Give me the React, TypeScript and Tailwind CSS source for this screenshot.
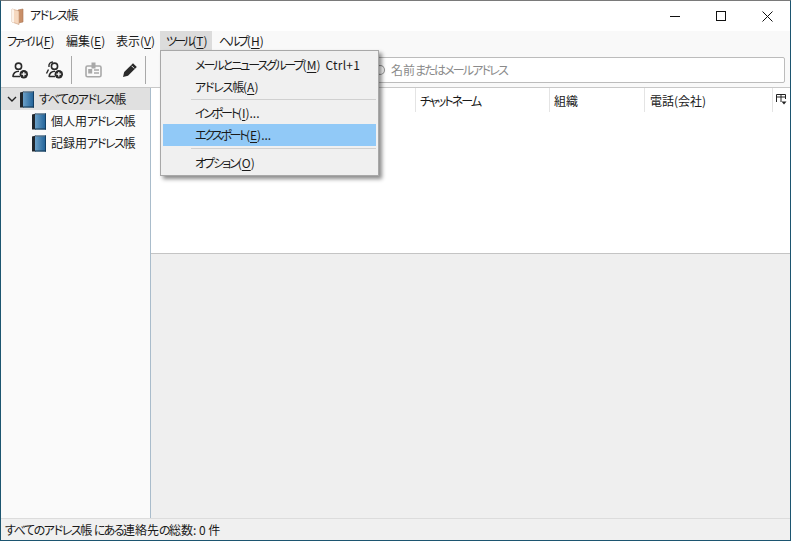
import type { ReactNode } from "react";

const font = "font-['Noto_Sans_CJK_JP','Noto_Sans',sans-serif] [font-feature-settings:'palt']";

function Book() {
  return (
    <svg width="14" height="17" viewBox="0 0 14 17" className="shrink-0">
      <defs>
        <linearGradient id="bookCover" x1="0" y1="0" x2="1" y2="0">
          <stop offset="0" stopColor="#6ba0c8" />
          <stop offset="1" stopColor="#1d5f96" />
        </linearGradient>
      </defs>
      <path d="M0 1.5 L4 0.5 L4 16.5 L0 16.5 Z" fill="#20262c" />
      <rect x="3" y="0.5" width="11" height="16" fill="url(#bookCover)" />
      <rect x="3" y="0.5" width="11" height="1" fill="#5b6a78" />
      <rect x="13" y="0.5" width="1" height="16" fill="#123f66" />
      <rect x="3" y="15.5" width="11" height="1" fill="#16364f" />
    </svg>
  );
}

function AddPerson({ second }: { second?: boolean }) {
  return (
    <svg width="18" height="18" viewBox="0 0 18 18" fill="none" stroke="#2a2a2a" strokeWidth="1.6">
      {second && <path d="M8 1 C5 1 3.5 3 4 6 M3.5 8.5 L1.5 12.5" strokeWidth="1.4" />}
      <circle cx={second ? 9.5 : 8.5} cy="5.2" r="3.1" />
      {second ? (
        <path d="M4 15.8 C4.5 12 6.5 10.3 10 10.3 M4 15.5 H10" />
      ) : (
        <path d="M2.8 15.8 C3.2 12 5.5 10.3 9 10.3 M2.8 15.5 H10" />
      )}
      <circle cx="13.8" cy="13.2" r="4.2" fill="#2a2a2a" stroke="none" />
      <path d="M11.5 13.2 H16.1 M13.8 10.9 V15.5" stroke="#fff" strokeWidth="1.2" />
    </svg>
  );
}

function CardIcon() {
  return (
    <svg width="17" height="16" viewBox="0 0 17 16" fill="none" stroke="#a8a8a8" strokeWidth="1.6">
      <rect x="1" y="4" width="15" height="10.8" rx="1.5" />
      <rect x="6.5" y="0.5" width="4" height="6" fill="#a8a8a8" stroke="none" />
      <rect x="3.2" y="7" width="4" height="4.5" fill="#a8a8a8" stroke="none" />
      <path d="M9 8 H14 M9 11 H14" strokeWidth="1.3" />
    </svg>
  );
}

function Pencil() {
  return (
    <svg width="16" height="16" viewBox="0 0 16 16" fill="#2a2a2a">
      <path d="M11 1.2 L14.8 5 L6 13.8 L1 15 L2.2 10 Z" />
      <path d="M9.6 3.8 L12.2 6.4" stroke="#f9f9f9" strokeWidth="0.9" />
    </svg>
  );
}

function AppIcon() {
  return (
    <svg width="14" height="17" viewBox="0 0 14 17">
      <path d="M8 2 L13 1 L13 14 L8 15 Z" fill="#c98f68" stroke="#a97350" strokeWidth="0.6" />
      <path d="M2 1 L9 3 L9 16.5 L2 14 Z" fill="#f6d8bf" stroke="#c79a7b" strokeWidth="0.6" />
      <path d="M2 1 L4 1.6 L4 14.7 L2 14 Z" fill="#fdf3ea" />
    </svg>
  );
}

function Mnemonic({ label, k, rest = "", tr = "" }: { label: string; k: string; rest?: string; tr?: string }) {
  return (
    <span className="whitespace-nowrap">
      <span className={tr}>{label}</span>(<span className="underline underline-offset-2">{k}</span>){rest}
    </span>
  );
}

function TopMenu({ children, active, w }: { children: ReactNode; active?: boolean; w: string }) {
  return <div className={`flex h-[21px] items-center pb-[1px] pl-[6px] ${w} ${active ? "bg-[#dcdcdc]" : ""}`}>{children}</div>;
}

function ToolBtn({ children, w }: { children: ReactNode; w: string }) {
  return <div className={`flex h-full items-center justify-center ${w}`}>{children}</div>;
}

function Sep() {
  return <div className="h-[28px] w-px bg-[#a9a9a9]" />;
}

function MenuRow({ children, right, hi }: { children: ReactNode; right?: string; hi?: boolean }) {
  return (
    <div className={`flex h-[22px] items-center justify-between pl-[32px] pr-[16px] ${hi ? "bg-[#91c9f7]" : ""}`}>
      <span>{children}</span>
      {right && <span className="tracking-[0.2px]">{right}</span>}
    </div>
  );
}

function Col({ w, children }: { w: string; children?: ReactNode }) {
  return <div className={`flex h-[24px] shrink-0 items-center border-r border-[#e4e4e4] pl-[4px] pt-[1px] ${w}`}>{children}</div>;
}

export default function App() {
  return (
    <div className={`relative flex h-[541px] w-[791px] flex-col overflow-hidden border border-[#1c5570] border-t-[#7a7a7a] bg-white text-[12px] leading-none text-[#1a1a1a] ${font}`}>
      {/* title bar */}
      <div className="flex h-[30px] shrink-0 items-center bg-white">
        <div className="ml-[9px] mr-[6px] flex w-[14px]">
          <AppIcon />
        </div>
        <span className="pb-[2px] tracking-[-1.4px] text-[#222]">アドレス帳</span>
        <div className="ml-auto flex h-full items-center">
          <div className="flex w-[46px] justify-center">
            <div className="h-px w-[10px] bg-[#111]" />
          </div>
          <div className="flex w-[46px] justify-center">
            <div className="h-[10px] w-[10px] border border-[#111]" />
          </div>
          <div className="flex w-[46px] justify-center">
            <svg width="11" height="11" viewBox="0 0 11 11" stroke="#111" strokeWidth="1">
              <path d="M0.5 0.5 L10.5 10.5 M10.5 0.5 L0.5 10.5" />
            </svg>
          </div>
        </div>
      </div>

      {/* menu bar */}
      <div className="flex h-[21px] shrink-0 items-center bg-[#f9f9f9]">
        <TopMenu w="w-[59px]"><Mnemonic label="ファイル" k="F" tr="tracking-[-2.2px]" /></TopMenu>
        <TopMenu w="w-[50px]"><Mnemonic label="編集" k="E" /></TopMenu>
        <TopMenu w="w-[50px]"><Mnemonic label="表示" k="V" /></TopMenu>
        <TopMenu w="w-[52px]" active><Mnemonic label="ツール" k="T" tr="tracking-[-2.6px]" /></TopMenu>
        <TopMenu w="w-[60px]"><span className="ml-[1px]"><Mnemonic label="ヘルプ" k="H" tr="tracking-[-2.2px]" /></span></TopMenu>
      </div>

      {/* toolbar */}
      <div className="flex h-[36px] shrink-0 items-center border-b border-[#c8c8c8] bg-[#f9f9f9]">
        <ToolBtn w="w-[35px]"><AddPerson /></ToolBtn>
        <ToolBtn w="w-[35px]"><AddPerson second /></ToolBtn>
        <Sep />
        <ToolBtn w="w-[42px]"><CardIcon /></ToolBtn>
        <ToolBtn w="w-[31px]"><Pencil /></ToolBtn>
        <Sep />
        <div className="ml-[20px] mr-[5px] flex h-[26px] flex-1 items-center rounded-[2px] border border-[#bcbcbc] bg-white pl-[207px] text-[#8a8a8a]">
          <svg width="12" height="12" viewBox="0 0 12 12" fill="none" stroke="#999" strokeWidth="1.2" className="mr-[5px]">
            <circle cx="6" cy="6" r="4.5" />
          </svg>
          名前<span className="tracking-[-1.8px]">またはメールアドレス</span>
        </div>
      </div>

      {/* body */}
      <div className="flex min-h-0 flex-1">
        <aside className="w-[150px] shrink-0 border-r border-[#a9bccb] bg-[#fafafa]">
          <div className="flex h-[22px] items-center bg-[#e0e0e0] pl-[6px]">
            <svg width="10" height="10" viewBox="0 0 10 10" fill="none" stroke="#222" strokeWidth="1.4" className="mr-[3px]">
              <path d="M1 3 L5 7 L9 3" />
            </svg>
            <Book />
            <span className="ml-[5px] tracking-[-1.4px]">すべてのアドレス帳</span>
          </div>
          <div className="flex h-[22px] items-center pl-[31px]">
            <Book />
            <span className="ml-[5px]">個人用<span className="tracking-[-1.4px]">アドレス</span>帳</span>
          </div>
          <div className="flex h-[22px] items-center pl-[31px]">
            <Book />
            <span className="ml-[5px]">記録用<span className="tracking-[-1.4px]">アドレス</span>帳</span>
          </div>
        </aside>
        <main className="flex min-w-0 flex-1 flex-col">
          <div className="h-[166px] shrink-0 border-b border-[#c4c4c4] bg-white">
            <div className="flex h-[24px]">
              <Col w="w-[265px]" />
              <Col w="w-[134px]"><span className="tracking-[-1.9px]">チャットネーム</span></Col>
              <Col w="w-[95px]">組織</Col>
              <Col w="w-[128px]"><span className="ml-[1px]">電話(会社)</span></Col>
              <div className="flex flex-1 items-center justify-center pb-[1px]">
                <svg width="11" height="11" viewBox="0 0 11 11" fill="none" stroke="#222">
                  <path d="M0.5 8 V0.5 H9.5 V5 M0.5 3 H9.5 M5 0.5 V8" />
                  <path d="M5.5 7.5 H10.5 L8 10.5 Z" fill="#222" stroke="none" />
                </svg>
              </div>
            </div>
          </div>
          <div className="flex-1 bg-[#efefef]" />
        </main>
      </div>

      {/* status bar */}
      <div className="flex h-[22px] shrink-0 items-center whitespace-pre border-t border-[#dcdcdc] bg-[#f0f0f0] pl-[4px]">
        <span className="mr-[3px] tracking-[-1.4px]">すべてのアドレス帳</span> <span className="tracking-[-1.6px]">にある</span>連絡先<span className="tracking-[-1.6px]">の</span>総数: 0 件
      </div>

      {/* open tools menu */}
      <div className="absolute left-[159px] top-[49px] w-[219px] border border-[#a8a8a8] bg-[#f0f0f0] px-[2px] pb-[1px] pt-[3px] shadow-[3px_3px_4px_rgba(0,0,0,0.45)]">
        <MenuRow right="Ctrl+1"><Mnemonic label="メールとニュースグループ" k="M" tr="tracking-[-2px]" /></MenuRow>
        <MenuRow><Mnemonic label="アドレス帳" k="A" tr="tracking-[-1.2px]" /></MenuRow>
        <div className="mb-[2px] ml-[28px] mt-[1px] h-px bg-[#d0d0d0]" />
        <MenuRow><Mnemonic label="インポート" k="I" rest="..." tr="tracking-[-2.2px]" /></MenuRow>
        <MenuRow hi><Mnemonic label="エクスポート" k="E" rest="..." tr="tracking-[-2.4px]" /></MenuRow>
        <div className="mb-[3px] ml-[28px] mt-[2px] h-px bg-[#d0d0d0]" />
        <MenuRow><Mnemonic label="オプション" k="O" tr="tracking-[-2px]" /></MenuRow>
      </div>
    </div>
  );
}
